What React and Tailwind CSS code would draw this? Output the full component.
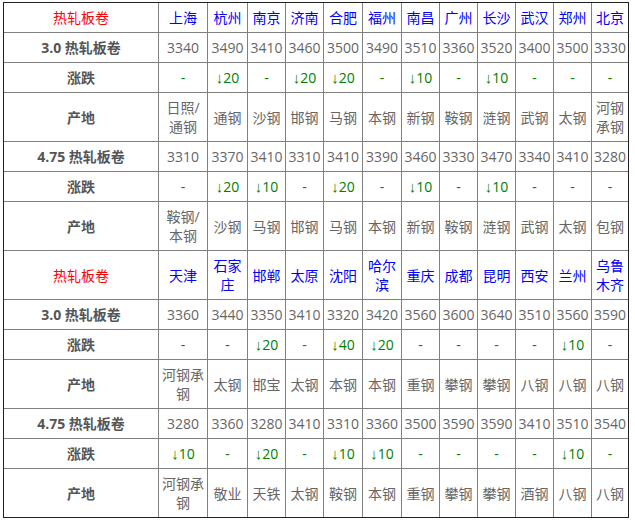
import React from "react";

const font = { fontFamily: '"Open Sans","Noto Sans CJK SC",sans-serif' };

const top = {
  cities: ["上海", "杭州", "南京", "济南", "合肥", "福州", "南昌", "广州", "长沙", "武汉", "郑州", "北京"],
  p30: ["3340", "3490", "3410", "3460", "3500", "3490", "3510", "3360", "3520", "3400", "3500", "3330"],
  c30: ["-", "↓20", "-", "↓20", "↓20", "-", "↓10", "-", "↓10", "-", "-", "-"],
  o30: [["日照/", "通钢"], ["通钢"], ["沙钢"], ["邯钢"], ["马钢"], ["本钢"], ["新钢"], ["鞍钢"], ["涟钢"], ["武钢"], ["太钢"], ["河钢", "承钢"]],
  p475: ["3310", "3370", "3410", "3310", "3410", "3390", "3460", "3330", "3470", "3340", "3410", "3280"],
  c475: ["-", "↓20", "↓10", "-", "↓20", "-", "↓10", "-", "↓10", "-", "-", "-"],
  o475: [["鞍钢/", "本钢"], ["沙钢"], ["马钢"], ["邯钢"], ["马钢"], ["本钢"], ["新钢"], ["鞍钢"], ["涟钢"], ["武钢"], ["太钢"], ["包钢"]],
};

const bottom = {
  cities: [["天津"], ["石家", "庄"], ["邯郸"], ["太原"], ["沈阳"], ["哈尔", "滨"], ["重庆"], ["成都"], ["昆明"], ["西安"], ["兰州"], ["乌鲁", "木齐"]],
  p30: ["3360", "3440", "3350", "3410", "3320", "3420", "3560", "3600", "3640", "3510", "3560", "3590"],
  c30: ["-", "-", "↓20", "-", "↓40", "↓20", "-", "-", "-", "-", "↓10", "-"],
  o30: [["河钢承", "钢"], ["太钢"], ["邯宝"], ["太钢"], ["本钢"], ["本钢"], ["重钢"], ["攀钢"], ["攀钢"], ["八钢"], ["八钢"], ["八钢"]],
  p475: ["3280", "3360", "3280", "3410", "3310", "3360", "3500", "3590", "3590", "3410", "3510", "3540"],
  c475: ["↓10", "-", "↓20", "-", "↓10", "↓10", "-", "-", "-", "-", "↓10", "-"],
  o475: [["河钢承", "钢"], ["敬业"], ["天铁"], ["太钢"], ["鞍钢"], ["本钢"], ["重钢"], ["攀钢"], ["攀钢"], ["酒钢"], ["八钢"], ["八钢"]],
};

function Cell({ children, className = "" }) {
  return (
    <div className={"bg-white flex flex-col items-center justify-center text-center py-[5px] leading-[19px] whitespace-nowrap " + className}>
      {children}
    </div>
  );
}

function Lines({ lines }) {
  return lines.map((l, i) => <span key={i} className="block">{l}</span>);
}

function Change({ v }) {
  if (v.startsWith("↓")) {
    return (
      <span className="block h-[19px]">
        <span className="font-['Liberation_Sans',sans-serif] text-[15px] leading-none">↓</span>
        {v.slice(1)}
      </span>
    );
  }
  return <span>{v}</span>;
}

function Section({ d, topCities }) {
  return (
    <>
      <Cell className="text-[#ff0000]">热轧板卷</Cell>
      {d.cities.map((c, i) => (
        <Cell key={"c" + i} className="text-[#0000ff]">
          {topCities ? c : <Lines lines={c} />}
        </Cell>
      ))}
      <Cell className="font-bold text-[#555555]">3.0 热轧板卷</Cell>
      {d.p30.map((v, i) => (
        <Cell key={"p" + i} className="text-[#666666]">{v}</Cell>
      ))}
      <Cell className="font-bold text-[#555555]">涨跌</Cell>
      {d.c30.map((v, i) => (
        <Cell key={"x" + i} className="text-[#008000]"><Change v={v} /></Cell>
      ))}
      <Cell className="font-bold text-[#555555]">产地</Cell>
      {d.o30.map((v, i) => (
        <Cell key={"o" + i} className="text-[#666666]"><Lines lines={v} /></Cell>
      ))}
      <Cell className="font-bold text-[#555555]">4.75 热轧板卷</Cell>
      {d.p475.map((v, i) => (
        <Cell key={"q" + i} className="text-[#666666]">{v}</Cell>
      ))}
      <Cell className="font-bold text-[#555555]">涨跌</Cell>
      {d.c475.map((v, i) => (
        <Cell key={"y" + i} className="text-[#008000]"><Change v={v} /></Cell>
      ))}
      <Cell className="font-bold text-[#555555]">产地</Cell>
      {d.o475.map((v, i) => (
        <Cell key={"r" + i} className="text-[#666666]"><Lines lines={v} /></Cell>
      ))}
    </>
  );
}

export default function App() {
  return (
    <div className="w-[635px] h-[522px] bg-white pt-[2px] pl-[3px]" style={font}>
      <div className="w-[626px] border border-[#222222] bg-[#808080]">
        <div className="grid grid-cols-[154px_48px_39px_37px_37px_38px_38px_37px_37px_37px_37px_37px_36px] gap-px text-[14px]">
          <Section d={top} topCities />
          <Section d={bottom} />
        </div>
      </div>
    </div>
  );
}
